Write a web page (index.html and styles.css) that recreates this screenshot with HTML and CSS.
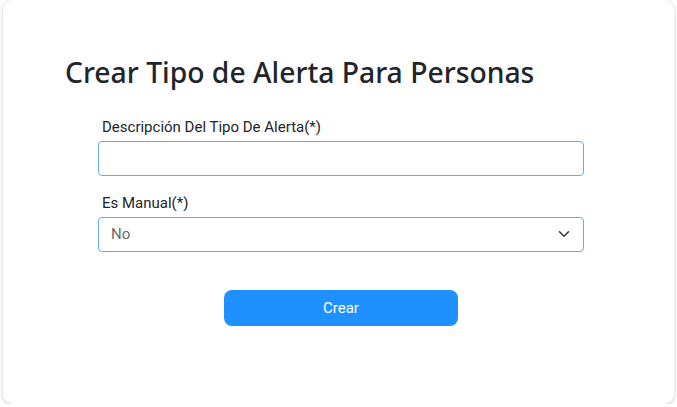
FILE: index.html
```html
<!DOCTYPE html>
<html>
<head>
    <meta charset="utf-8" />
    <title>Crear Tipo de Alerta</title>
    <link rel="stylesheet" href="styles.css">
</head>
<body>
    <div class="card">
        <h2 class="title">Crear Tipo de Alerta Para Personas</h2>
        <form class="form">
            <!-- descripcion -->
            <div class="field">
                <label for="desc">Descripción Del Tipo De Alerta(*)</label>
                <input id="desc" type="text" />
            </div>
            <!-- es manual -->
            <div class="field">
                <label for="manual">Es Manual(*)</label>
                <div class="select-wrap">
                    <select id="manual">
                        <option>No</option>
                        <option>Si</option>
                    </select>
                    <svg class="chevron" width="12" height="8" viewBox="0 0 12 8">
                        <path d="M1.5 1.8 L6 6.2 L10.5 1.8" fill="none" stroke="#343a40" stroke-width="1.6" stroke-linecap="round" stroke-linejoin="round"/>
                    </svg>
                </div>
            </div>
            <div class="actions">
                <button type="button" class="btn">Crear</button>
            </div>
        </form>
    </div>
</body>
</html>
```

FILE: styles.css
```css
/*清除边距*/
html,body{
    margin: 0;
    padding: 0;
}
body{
    background-color: #fff;
    font-family: Roboto, "Liberation Sans", sans-serif;
    color: #212529;
}
/*卡片*/
.card{
    margin: 0 3px;
    height: 404px;
    box-sizing: border-box;
    padding: 56px 62px 0 62px;
    background-color: #fff;
    border-radius: 10px;
    box-shadow: 0 1px 4px rgba(0,0,0,0.22);
}
.title{
    margin: 0;
    font-family: "Noto Sans", "Open Sans", sans-serif;
    font-size: 28.3px;
    font-weight: 500;
    line-height: 1.2;
    color: #212529;
}
/*表单*/
.form{
    width: 486px;
    margin: 27px 0 0 33px;
}
.field{
    display: flex;
    flex-direction: column;
    margin-bottom: 17px;
}
.field label{
    font-size: 15px;
    line-height: 20px;
    padding-left: 4px;
    margin-bottom: 4px;
}
.field input,
.field select{
    width: 100%;
    height: 35px;
    box-sizing: border-box;
    border: 1px solid #66aaf2;
    border-radius: 4px;
    background-color: #fff;
    font-family: Roboto, sans-serif;
    font-size: 15px;
    outline: none;
}
.field select{
    appearance: none;
    -webkit-appearance: none;
    padding: 0 12px;
    color: #6a6a6a;
}
.select-wrap{
    position: relative;
}
.chevron{
    position: absolute;
    right: 14px;
    top: 13px;
    pointer-events: none;
}
/*按钮*/
.actions{
    display: flex;
    justify-content: center;
    padding-top: 21px;
}
.btn{
    width: 234px;
    height: 36px;
    border: none;
    border-radius: 8px;
    background-color: #1e90ff;
    color: #fff;
    font-family: Roboto, sans-serif;
    font-size: 15px;
    cursor: pointer;
}
```
